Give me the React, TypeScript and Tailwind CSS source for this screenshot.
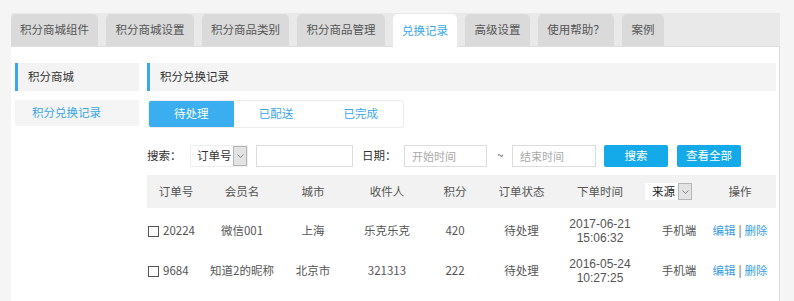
import type { FC, ReactNode } from 'react';

const tabs = [
  { label: '积分商城组件', w: 'w-[87px]' },
  { label: '积分商城设置', w: 'w-[88px]' },
  { label: '积分商品类别', w: 'w-[87px]' },
  { label: '积分商品管理', w: 'w-[88px]' },
  { label: '兑换记录', w: 'w-[64px]', active: true },
  { label: '高级设置', w: 'w-[65px]' },
  { label: '使用帮助？', w: 'w-[76px]' },
  { label: '案例', w: 'w-[42px]' },
];

const cols = ['w-[58px]', 'w-[74px]', 'w-[68px]', 'w-[80px]', 'w-[56px]', 'w-[77px]', 'w-[80px]', 'w-[70px]', 'w-[66px]'];

const rows = [
  { id: '20224', member: '微信001', city: '上海', to: '乐克乐克', score: '420', date: '2017-06-21', time: '15:06:32' },
  { id: '9684', member: '知道2的昵称', city: '北京市', to: '321313', score: '222', date: '2016-05-24', time: '10:27:25' },
];

const Arrow: FC = () => (
  <div className="flex h-full w-[14px] shrink-0 items-center justify-center border border-[#b5b5b5] bg-[#e3e3e3]">
    <svg width="7" height="4" viewBox="0 0 7 4" fill="none">
      <path d="M0.5 0.5 L3.5 3.5 L6.5 0.5" stroke="#777" strokeWidth="0.9" />
    </svg>
  </div>
);

const Cell: FC<{ i: number; children?: ReactNode; className?: string }> = ({ i, children, className }) => (
  <div className={`${cols[i]} flex shrink-0 items-center justify-center whitespace-nowrap ${className ?? ''}`}>{children}</div>
);

export default function App() {
  return (
    <div className="h-[301px] w-[794px] overflow-hidden bg-[#f5f5f5] pl-[11px] pt-[13px] font-['Noto_Sans_CJK_SC',sans-serif] text-[11.5px] text-[#555]">
      <div className="w-[769px]">
        {/* top tabs */}
        <div className="flex h-[33px] items-end gap-[8px] bg-[#e9e9e9]">
          {tabs.map((t) => (
            <div
              key={t.label}
              className={`${t.w} flex items-center justify-center whitespace-nowrap rounded-t-[5px] leading-none ${
                t.active ? 'relative z-10 -mb-px h-[33px] bg-white text-[#3aa7e6]' : 'h-[32px] bg-[#dadada] text-[#555]'
              }`}
            >
              {t.label}
            </div>
          ))}
        </div>

        <div className="flex h-[255px] w-[769px] gap-[8px] border-r border-t border-[#dedede] bg-white pl-[4px] pt-[16px]">
          {/* sidebar */}
          <div className="w-[124px] shrink-0">
            <div className="flex h-[28px] items-center border-l-[3px] border-[#3aa9e8] bg-[#f3f3f3] pl-[10px] text-[#333]">积分商城</div>
            <div className="mt-[9px] flex h-[26px] items-center bg-[#f5f5f5] pl-[17px] text-[#3aa7e6]">积分兑换记录</div>
          </div>

          {/* content */}
          <div className="w-[629px] shrink-0">
            <div className="flex h-[28px] items-center border-l-[3px] border-[#3aa9e8] bg-[#f4f4f4] pl-[10px] text-[#333]">积分兑换记录</div>

            <div className="ml-px mt-[9px] flex h-[28px] w-[256px] overflow-hidden rounded-[3px] border border-[#ececec]">
              <div className="flex w-[85px] items-center justify-center bg-[#3aaeef] text-white">待处理</div>
              <div className="flex w-[85px] items-center justify-center text-[#3aa7e6]">已配送</div>
              <div className="flex w-[85px] items-center justify-center text-[#3aa7e6]">已完成</div>
            </div>

            {/* search */}
            <div className="mt-[17px] flex h-[22px] items-center whitespace-nowrap text-[#333]">
              <span className="w-[43px]">搜索：</span>
              <div className="flex h-[22px] w-[58px] items-center border border-[#eee] pl-[6px]">
                <span className="flex-1">订单号</span>
                <Arrow />
              </div>
              <div className="ml-[8px] h-[22px] w-[97px] border border-[#ddd]" />
              <span className="ml-[9px] w-[42px]">日期：</span>
              <div className="flex h-[22px] w-[83px] items-center border border-[#ddd] pl-[7px] text-[11px] text-[#aaa]">开始时间</div>
              <span className="ml-[10px] w-[15px] text-[#555]">~</span>
              <div className="flex h-[22px] w-[84px] items-center border border-[#ddd] pl-[7px] text-[11px] text-[#aaa]">结束时间</div>
              <div className="ml-[8px] flex h-[22px] w-[64px] items-center justify-center rounded-[2px] bg-[#14a9e9] text-white">搜索</div>
              <div className="ml-[9px] flex h-[22px] w-[64px] items-center justify-center rounded-[2px] bg-[#14a9e9] text-white">查看全部</div>
            </div>

            {/* table */}
            <div className="mt-[8px]">
              <div className="flex h-[33px] items-center bg-[#f2f2f2]">
                <Cell i={0}>订单号</Cell>
                <Cell i={1}>会员名</Cell>
                <Cell i={2}>城市</Cell>
                <Cell i={3}>收件人</Cell>
                <Cell i={4}>积分</Cell>
                <Cell i={5}>订单状态</Cell>
                <Cell i={6}>下单时间</Cell>
                <Cell i={7} className="justify-start pl-[5px]">
                  <div className="flex h-[17px] w-[47px] items-center bg-white pl-[7px] text-[#222]">
                    <span className="flex-1">来源</span>
                    <Arrow />
                  </div>
                </Cell>
                <Cell i={8} className="pr-[6px]">操作</Cell>
              </div>
              <div className="pt-[3px]">
                {rows.map((r) => (
                  <div key={r.id} className="flex h-[40px] items-center">
                    <Cell i={0} className="justify-start pl-px">
                      <span className="mr-[4px] inline-block h-[11px] w-[11px] border border-[#555]" />
                      {r.id}
                    </Cell>
                    <Cell i={1}>{r.member}</Cell>
                    <Cell i={2}>{r.city}</Cell>
                    <Cell i={3}>{r.to}</Cell>
                    <Cell i={4}>{r.score}</Cell>
                    <Cell i={5}>待处理</Cell>
                    <Cell i={6} className="flex-col font-['Liberation_Sans',sans-serif] text-[12px]">
                      <div className="h-[14px] leading-[14px]">{r.date}</div>
                      <div className="h-[14px] leading-[14px]">{r.time}</div>
                    </Cell>
                    <Cell i={7} className="pl-[8px]">手机端</Cell>
                    <Cell i={8} className="pr-[6px]">
                      <span className="text-[#3a9de3]">编辑</span>
                      <span className="mx-[3px] text-[#555]">|</span>
                      <span className="text-[#3a9de3]">删除</span>
                    </Cell>
                  </div>
                ))}
              </div>
            </div>
          </div>
        </div>
      </div>
    </div>
  );
}
